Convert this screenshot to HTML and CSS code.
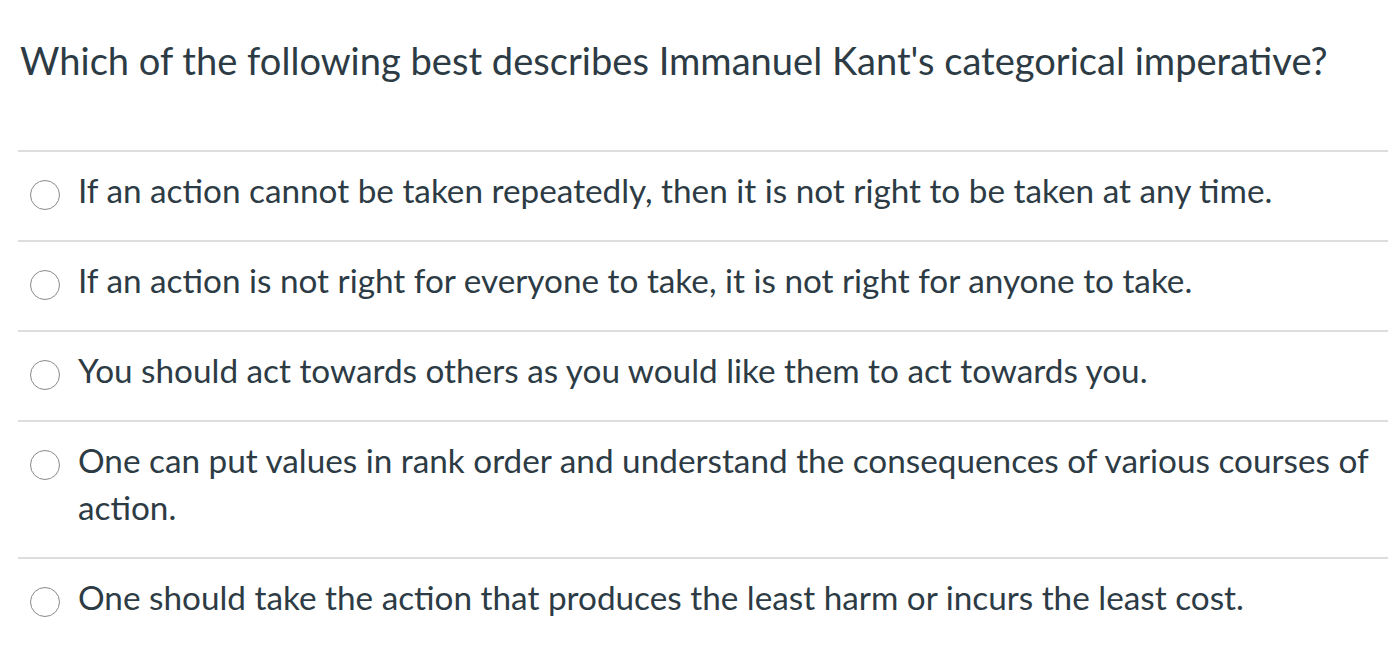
FILE: index.html
```html
<!DOCTYPE html>
<html lang="en">
<head>
<meta charset="utf-8">
<title>Quiz question</title>
<link rel="stylesheet" href="styles.css">
</head>
<body>
<div class="quiz">
  <h1 class="question">Which of the following best describes Immanuel Kant's categorical imperative?</h1>
  <ul class="answers">
    <li class="answer"><span class="radio"></span><span class="label">If an action cannot be taken repeatedly, then it is not right to be taken at any time.</span></li>
    <li class="answer"><span class="radio"></span><span class="label">If an action is not right for everyone to take, it is not right for anyone to take.</span></li>
    <li class="answer"><span class="radio"></span><span class="label">You should act towards others as you would like them to act towards you.</span></li>
    <li class="answer"><span class="radio"></span><span class="label">One can put values in rank order and understand the consequences of various courses of action.</span></li>
    <li class="answer"><span class="radio"></span><span class="label">One should take the action that produces the least harm or incurs the least cost.</span></li>
  </ul>
</div>
</body>
</html>
```

FILE: styles.css
```css
html, body {
  margin: 0;
  padding: 0;
  background: #ffffff;
}

body {
  font-family: Lato, "Open Sans", "Liberation Sans", sans-serif;
  color: #2d3b45;
}

.quiz {
  padding-left: 18px;
}

.question {
  margin: 0;
  padding: 38px 0 0 2px;
  height: 112px;
  font-size: 38.1px;
  font-weight: 400;
  line-height: 1.2;
}

.answers {
  list-style: none;
  margin: 0;
  padding: 0;
}

.answer {
  display: flex;
  align-items: flex-start;
  gap: 18px;
  border-top: 2px solid #dddddd;
  padding: 15px 0 26px 12px;
  font-size: 33.3px;
  line-height: 47px;
}

.radio {
  flex: 0 0 auto;
  box-sizing: border-box;
  width: 30px;
  height: 30px;
  margin-top: 13px;
  border: 1px solid #8a8a8a;
  border-radius: 50%;
  background: #ffffff;
}

.label {
  flex: 1 1 auto;
  padding-right: 10px;
}
```
